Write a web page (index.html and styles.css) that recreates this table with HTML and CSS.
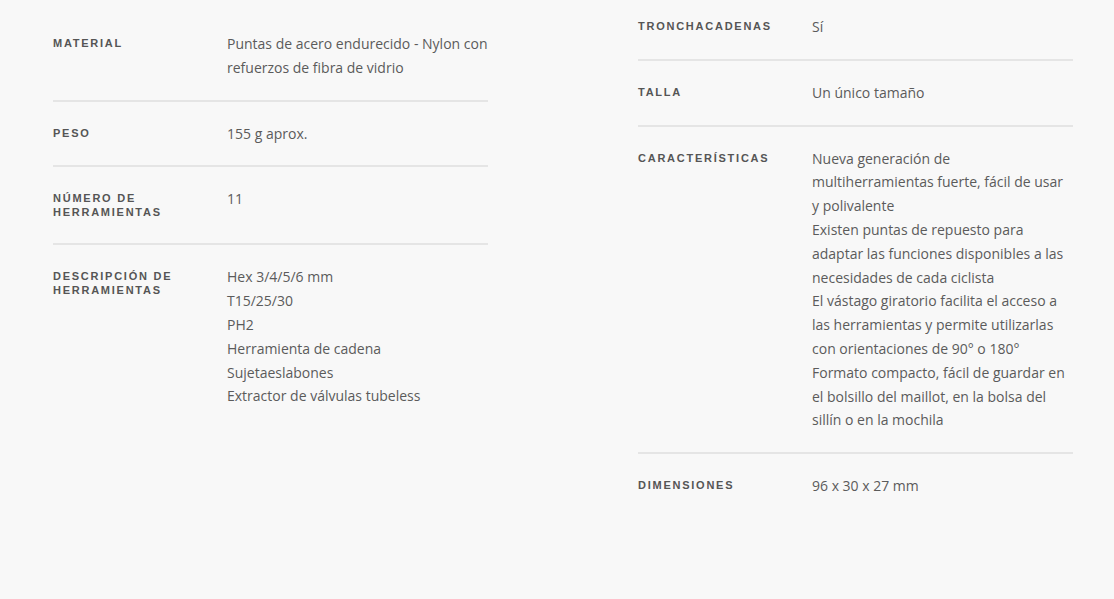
FILE: index.html
```html
<!DOCTYPE html>
<html lang="es">
<head>
<meta charset="utf-8">
<title>Especificaciones</title>
<link rel="stylesheet" href="styles.css">
</head>
<body>
<div class="specs">
  <dl class="specs__col">
    <div class="spec">
      <dt class="spec__label">Material</dt>
      <dd class="spec__value">Puntas de acero endurecido - Nylon con refuerzos de fibra de vidrio</dd>
    </div>
    <div class="spec">
      <dt class="spec__label">Peso</dt>
      <dd class="spec__value">155 g aprox.</dd>
    </div>
    <div class="spec">
      <dt class="spec__label">Número de herramientas</dt>
      <dd class="spec__value">11</dd>
    </div>
    <div class="spec spec--last">
      <dt class="spec__label">Descripción de herramientas</dt>
      <dd class="spec__value">Hex 3/4/5/6 mm<br>T15/25/30<br>PH2<br>Herramienta de cadena<br>Sujetaeslabones<br>Extractor de válvulas tubeless</dd>
    </div>
  </dl>
  <dl class="specs__col specs__col--right">
    <div class="spec">
      <dt class="spec__label">Tronchacadenas</dt>
      <dd class="spec__value">Sí</dd>
    </div>
    <div class="spec">
      <dt class="spec__label">Talla</dt>
      <dd class="spec__value">Un único tamaño</dd>
    </div>
    <div class="spec">
      <dt class="spec__label">Características</dt>
      <dd class="spec__value">Nueva generación de multiherramientas fuerte, fácil de usar y polivalente<br>Existen puntas de repuesto para adaptar las funciones disponibles a las necesidades de cada ciclista<br>El vástago giratorio facilita el acceso a las herramientas y permite utilizarlas con orientaciones de 90° o 180°<br>Formato compacto, fácil de guardar en el bolsillo del maillot, en la bolsa del sillín o en la mochila</dd>
    </div>
    <div class="spec spec--last">
      <dt class="spec__label">Dimensiones</dt>
      <dd class="spec__value">96 x 30 x 27 mm</dd>
    </div>
  </dl>
</div>
</body>
</html>
```

FILE: styles.css
```css
html, body {
  margin: 0;
  padding: 0;
  background: #f8f8f8;
}

body {
  font-family: "Open Sans", "Liberation Sans", sans-serif;
  color: #5b5b5b;
  height: 599px;
  overflow: hidden;
}

.specs {
  display: grid;
  grid-template-columns: 435px 435px;
  column-gap: 150px;
  padding: 12px 0 0 53px;
  align-items: start;
}

.specs__col {
  margin: 0;
  padding: 0;
}

.specs__col--right {
  margin-top: -17px;
}

.spec {
  display: grid;
  grid-template-columns: 174px 1fr;
  padding: 20px 0;
  border-bottom: 2px solid #e5e5e5;
}

.spec--last {
  border-bottom: none;
}

.spec__label {
  margin: 4px 0;
  font-family: "Liberation Sans", Arial, sans-serif;
  font-weight: 700;
  font-size: 11px;
  line-height: 14px;
  letter-spacing: 1.75px;
  text-transform: uppercase;
  color: #555;
}

.spec__value {
  margin: 0;
  font-size: 14px;
  line-height: 1.7;
  color: #5b5b5b;
}
```
